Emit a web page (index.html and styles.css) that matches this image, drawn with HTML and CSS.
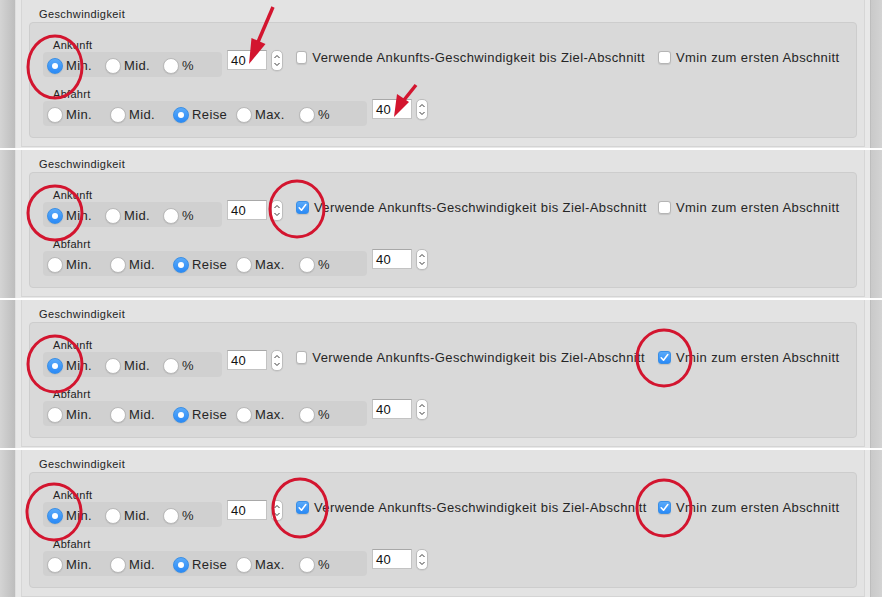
FILE: index.html
```html
<!DOCTYPE html>
<html lang="de">
<head>
  <meta charset="UTF-8">
  <title>Geschwindigkeit</title>
  <link rel="stylesheet" href="styles.css">
</head>
<body>

  <!-- 1: Ausgangszustand -->
  <section class="strip">
    <div class="gutter-left"></div>
    <div class="window">
      <div class="panel">
        <div class="legend">Geschwindigkeit</div>
        <div class="group">
          <div class="row">
            <div class="field">
              <div class="field-label">Ankunft</div>
              <div class="radios arr">
                <div class="radio on"><span class="knob"></span>Min.</div>
                <div class="radio"><span class="knob"></span>Mid.</div>
                <div class="radio"><span class="knob"></span>%</div>
              </div>
            </div>
            <div class="number">40</div>
            <div class="stepper"><svg width="12" height="21" viewBox="0 0 12 21"><path d="M3.5 8 L6 5.5 L8.5 8 M3.5 13 L6 15.5 L8.5 13" /></svg></div>
            <div class="check first"><span class="box"></span>Verwende Ankunfts-Geschwindigkeit bis Ziel-Abschnitt</div>
            <div class="check"><span class="box"></span>Vmin zum ersten Abschnitt</div>
          </div>
          <div class="row">
            <div class="field">
              <div class="field-label">Abfahrt</div>
              <div class="radios dep">
                <div class="radio"><span class="knob"></span>Min.</div>
                <div class="radio"><span class="knob"></span>Mid.</div>
                <div class="radio on"><span class="knob"></span>Reise</div>
                <div class="radio"><span class="knob"></span>Max.</div>
                <div class="radio"><span class="knob"></span>%</div>
              </div>
            </div>
            <div class="number">40</div>
            <div class="stepper"><svg width="12" height="21" viewBox="0 0 12 21"><path d="M3.5 8 L6 5.5 L8.5 8 M3.5 13 L6 15.5 L8.5 13" /></svg></div>
          </div>
        </div>
      </div>
    </div>
    <div class="gutter-right"></div>
    <svg class="marks" width="882" height="148" viewBox="0 0 882 148">
      <ellipse cx="55" cy="67" rx="27" ry="31" />
      <line x1="273" y1="7" x2="258" y2="42" />
      <polygon points="249,64 265.5,44 251.5,38" />
      <line x1="416" y1="85" x2="404" y2="100" />
      <polygon points="394,117 409,102 397,94" />
    </svg>
  </section>

  <!-- 2: Ankunfts-Geschwindigkeit bis Ziel -->
  <section class="strip">
    <div class="gutter-left"></div>
    <div class="window">
      <div class="panel">
        <div class="legend">Geschwindigkeit</div>
        <div class="group">
          <div class="row">
            <div class="field">
              <div class="field-label">Ankunft</div>
              <div class="radios arr">
                <div class="radio on"><span class="knob"></span>Min.</div>
                <div class="radio"><span class="knob"></span>Mid.</div>
                <div class="radio"><span class="knob"></span>%</div>
              </div>
            </div>
            <div class="number">40</div>
            <div class="stepper"><svg width="12" height="21" viewBox="0 0 12 21"><path d="M3.5 8 L6 5.5 L8.5 8 M3.5 13 L6 15.5 L8.5 13" /></svg></div>
            <div class="check first on"><span class="box"><svg width="13" height="13" viewBox="0 0 13 13"><path d="M3.2 6.8 L5.5 9.2 L9.8 3.6" /></svg></span>Verwende Ankunfts-Geschwindigkeit bis Ziel-Abschnitt</div>
            <div class="check"><span class="box"></span>Vmin zum ersten Abschnitt</div>
          </div>
          <div class="row">
            <div class="field">
              <div class="field-label">Abfahrt</div>
              <div class="radios dep">
                <div class="radio"><span class="knob"></span>Min.</div>
                <div class="radio"><span class="knob"></span>Mid.</div>
                <div class="radio on"><span class="knob"></span>Reise</div>
                <div class="radio"><span class="knob"></span>Max.</div>
                <div class="radio"><span class="knob"></span>%</div>
              </div>
            </div>
            <div class="number">40</div>
            <div class="stepper"><svg width="12" height="21" viewBox="0 0 12 21"><path d="M3.5 8 L6 5.5 L8.5 8 M3.5 13 L6 15.5 L8.5 13" /></svg></div>
          </div>
        </div>
      </div>
    </div>
    <div class="gutter-right"></div>
    <svg class="marks" width="882" height="148" viewBox="0 0 882 148">
      <ellipse cx="55" cy="63" rx="27" ry="27" />
      <ellipse cx="297" cy="59" rx="27" ry="28" />
    </svg>
  </section>

  <!-- 3: Vmin zum ersten Abschnitt -->
  <section class="strip">
    <div class="gutter-left"></div>
    <div class="window">
      <div class="panel">
        <div class="legend">Geschwindigkeit</div>
        <div class="group">
          <div class="row">
            <div class="field">
              <div class="field-label">Ankunft</div>
              <div class="radios arr">
                <div class="radio on"><span class="knob"></span>Min.</div>
                <div class="radio"><span class="knob"></span>Mid.</div>
                <div class="radio"><span class="knob"></span>%</div>
              </div>
            </div>
            <div class="number">40</div>
            <div class="stepper"><svg width="12" height="21" viewBox="0 0 12 21"><path d="M3.5 8 L6 5.5 L8.5 8 M3.5 13 L6 15.5 L8.5 13" /></svg></div>
            <div class="check first"><span class="box"></span>Verwende Ankunfts-Geschwindigkeit bis Ziel-Abschnitt</div>
            <div class="check on"><span class="box"><svg width="13" height="13" viewBox="0 0 13 13"><path d="M3.2 6.8 L5.5 9.2 L9.8 3.6" /></svg></span>Vmin zum ersten Abschnitt</div>
          </div>
          <div class="row">
            <div class="field">
              <div class="field-label">Abfahrt</div>
              <div class="radios dep">
                <div class="radio"><span class="knob"></span>Min.</div>
                <div class="radio"><span class="knob"></span>Mid.</div>
                <div class="radio on"><span class="knob"></span>Reise</div>
                <div class="radio"><span class="knob"></span>Max.</div>
                <div class="radio"><span class="knob"></span>%</div>
              </div>
            </div>
            <div class="number">40</div>
            <div class="stepper"><svg width="12" height="21" viewBox="0 0 12 21"><path d="M3.5 8 L6 5.5 L8.5 8 M3.5 13 L6 15.5 L8.5 13" /></svg></div>
          </div>
        </div>
      </div>
    </div>
    <div class="gutter-right"></div>
    <svg class="marks" width="882" height="148" viewBox="0 0 882 148">
      <ellipse cx="55" cy="64" rx="27" ry="28" />
      <ellipse cx="664" cy="58" rx="27" ry="28" />
    </svg>
  </section>

  <!-- 4: beide Optionen -->
  <section class="strip">
    <div class="gutter-left"></div>
    <div class="window">
      <div class="panel">
        <div class="legend">Geschwindigkeit</div>
        <div class="group">
          <div class="row">
            <div class="field">
              <div class="field-label">Ankunft</div>
              <div class="radios arr">
                <div class="radio on"><span class="knob"></span>Min.</div>
                <div class="radio"><span class="knob"></span>Mid.</div>
                <div class="radio"><span class="knob"></span>%</div>
              </div>
            </div>
            <div class="number">40</div>
            <div class="stepper"><svg width="12" height="21" viewBox="0 0 12 21"><path d="M3.5 8 L6 5.5 L8.5 8 M3.5 13 L6 15.5 L8.5 13" /></svg></div>
            <div class="check first on"><span class="box"><svg width="13" height="13" viewBox="0 0 13 13"><path d="M3.2 6.8 L5.5 9.2 L9.8 3.6" /></svg></span>Verwende Ankunfts-Geschwindigkeit bis Ziel-Abschnitt</div>
            <div class="check on"><span class="box"><svg width="13" height="13" viewBox="0 0 13 13"><path d="M3.2 6.8 L5.5 9.2 L9.8 3.6" /></svg></span>Vmin zum ersten Abschnitt</div>
          </div>
          <div class="row">
            <div class="field">
              <div class="field-label">Abfahrt</div>
              <div class="radios dep">
                <div class="radio"><span class="knob"></span>Min.</div>
                <div class="radio"><span class="knob"></span>Mid.</div>
                <div class="radio on"><span class="knob"></span>Reise</div>
                <div class="radio"><span class="knob"></span>Max.</div>
                <div class="radio"><span class="knob"></span>%</div>
              </div>
            </div>
            <div class="number">40</div>
            <div class="stepper"><svg width="12" height="21" viewBox="0 0 12 21"><path d="M3.5 8 L6 5.5 L8.5 8 M3.5 13 L6 15.5 L8.5 13" /></svg></div>
          </div>
        </div>
      </div>
    </div>
    <div class="gutter-right"></div>
    <svg class="marks" width="882" height="148" viewBox="0 0 882 148">
      <ellipse cx="54" cy="62" rx="27" ry="28" />
      <ellipse cx="300" cy="58" rx="27" ry="29" />
      <ellipse cx="664" cy="58" rx="27" ry="28" />
    </svg>
  </section>

</body>
</html>
```

FILE: styles.css
```css
* { box-sizing: border-box; }

html, body {
  margin: 0;
  padding: 0;
  background: #fff;
  font-family: 'Liberation Sans', Arial, sans-serif;
  font-size: 13px;
  letter-spacing: 0.38px;
  color: #262626;
  overflow: hidden;
}

.strip {
  position: relative;
  display: flex;
  height: 148px;
  margin-bottom: 2px;
  overflow: hidden;
}

.gutter-left {
  width: 16px;
  background: linear-gradient(to right, #d4d4d4, #bdbdbd);
  border-right: 1px solid #dedede;
}

.gutter-right {
  width: 12px;
  background: linear-gradient(to right, #c9c9c9, #d3d3d3);
  border-left: 1px solid #bdbdbd;
}

.window {
  flex: 1;
  background: #e8e8e8;
  padding: 0 5px 1px 5px;
}

.panel {
  height: 147px;
  background: #e3e3e3;
  border-left: 1px solid #d6d6d6;
  border-right: 1px solid #d6d6d6;
  border-bottom: 1px solid #d4d4d4;
}

.legend {
  font-size: 11px;
  line-height: 13px;
  letter-spacing: 0.4px;
  padding: 8px 0 0 17px;
  color: #222;
}

.group {
  margin: 1px 0 0 7px;
  width: 828px;
  height: 116px;
  background: #d9d9d9;
  border: 1px solid #cdcdcd;
  border-radius: 4px;
  padding: 16px 0 0 13px;
  display: flex;
  flex-direction: column;
  gap: 11px;
}

.row {
  display: flex;
  align-items: flex-start;
}

.field-label {
  font-size: 11px;
  line-height: 13px;
  letter-spacing: 0.3px;
  padding-left: 10px;
  color: #222;
}

.radios {
  height: 25px;
  display: flex;
  align-items: center;
  padding-left: 4px;
  padding-top: 2px;
  background: #d0d0d0;
  border-radius: 4px;
}

.radios.arr { width: 179px; }
.radios.arr .radio { width: 58px; }
.radios.dep { width: 324px; }
.radios.dep .radio { width: 63px; }

.radio {
  display: flex;
  align-items: center;
  line-height: 16px;
}

.knob {
  width: 16px;
  height: 16px;
  margin-right: 3px;
  border-radius: 50%;
  background: #fff;
  border: 1px solid #b9b9b9;
  box-shadow: 0 0.5px 1px rgba(0, 0, 0, 0.12);
  position: relative;
}

.radio.on .knob {
  background: linear-gradient(#5aaaf9, #2a8af7);
  border-color: #3a8fe6;
}

.radio.on .knob::after {
  content: "";
  position: absolute;
  left: 4px;
  top: 4px;
  width: 6px;
  height: 6px;
  border-radius: 50%;
  background: #fff;
}

.number {
  margin: 11px 0 0 5px;
  width: 40px;
  height: 20px;
  background: #fff;
  border: 1px solid #c3c3c3;
  border-top-color: #a8a8a8;
  padding-left: 3px;
  line-height: 19px;
  color: #111;
}

.stepper {
  margin: 11px 0 0 4px;
  width: 12px;
  height: 21px;
  background: #fff;
  border: 1px solid #bdbdbd;
  border-radius: 5px;
  box-shadow: 0 0.5px 1px rgba(0, 0, 0, 0.1);
  overflow: hidden;
}

.stepper svg {
  display: block;
  margin: -1px 0 0 -1px;
}

.stepper path {
  fill: none;
  stroke: #3a3a3a;
  stroke-width: 1;
}

.check {
  margin: 11px 0 0 13px;
  height: 14px;
  display: flex;
  align-items: center;
  white-space: nowrap;
}

.check.first {
  width: 349px;
}

.box {
  width: 13px;
  height: 13px;
  margin-right: 5px;
  background: #fff;
  border: 1px solid #b5b5b5;
  border-radius: 3px;
  box-shadow: 0 0.5px 1px rgba(0, 0, 0, 0.1);
}

.check.on .box {
  background: linear-gradient(#5aaaf9, #2a8af7);
  border-color: #3a8fe6;
}

.box svg {
  display: block;
  margin: -1px 0 0 -1px;
}

.box path {
  fill: none;
  stroke: #fff;
  stroke-width: 1.6;
  stroke-linecap: round;
  stroke-linejoin: round;
}

/* rote Markierungen der Anleitung */
.marks {
  position: absolute;
  left: 0;
  top: 0;
  pointer-events: none;
}

.marks ellipse,
.marks line {
  fill: none;
  stroke: #d3152f;
  stroke-width: 3;
}

.marks line {
  stroke-width: 3.5;
}

.marks polygon {
  fill: #d3152f;
}
```
